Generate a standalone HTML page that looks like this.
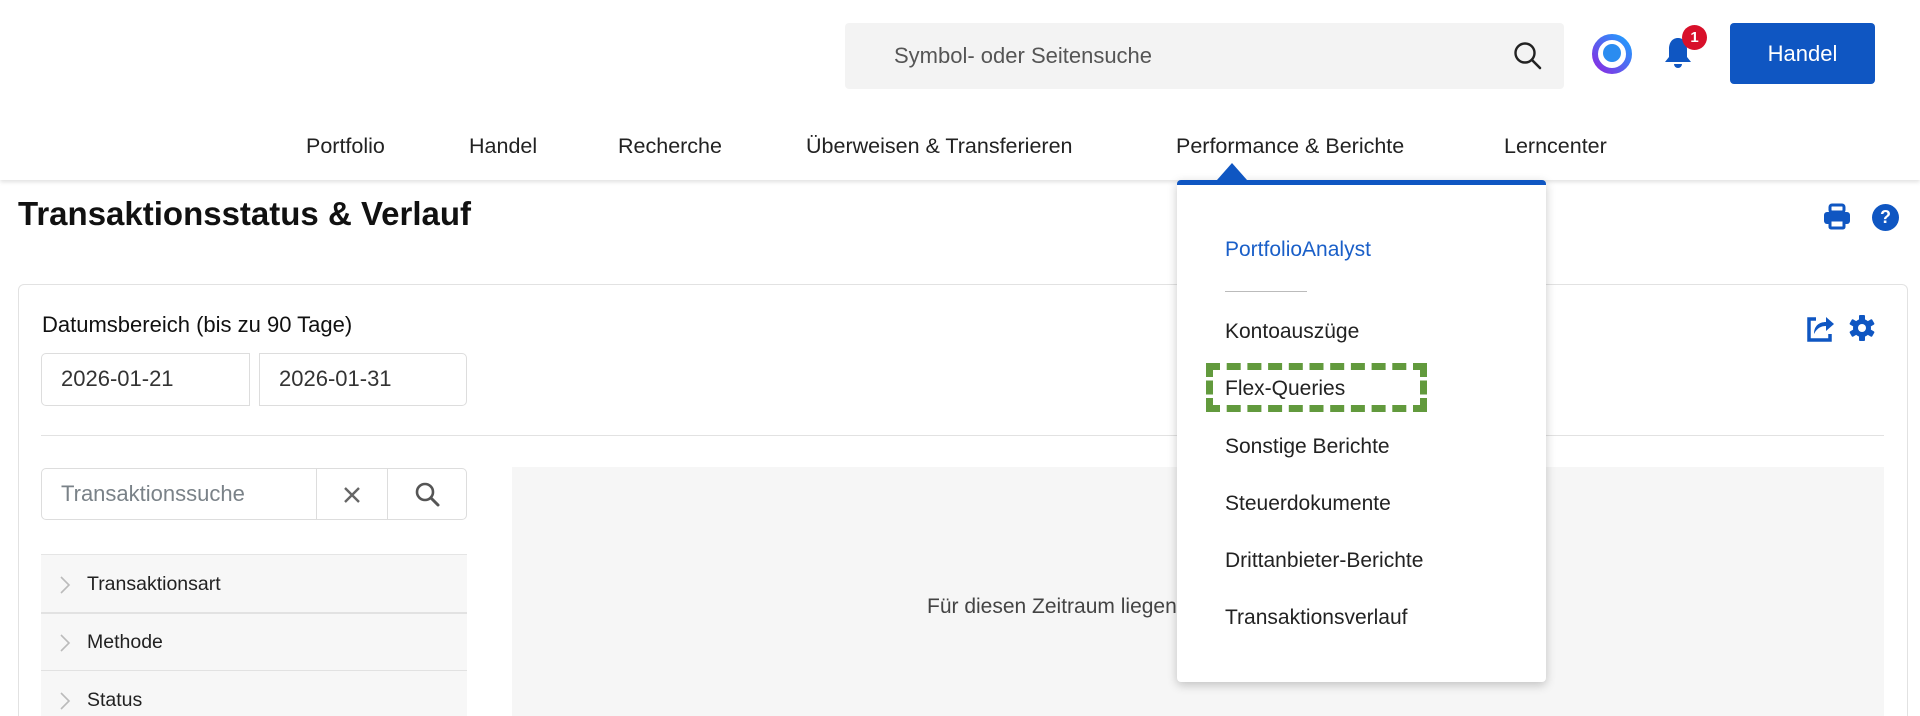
<!DOCTYPE html>
<html><head><meta charset="utf-8"><style>
*{margin:0;padding:0;box-sizing:border-box}
html,body{width:1920px;height:716px;overflow:hidden}
body{background:#fff;font-family:"Liberation Sans",sans-serif;color:#222;position:relative}
.a{position:absolute;white-space:nowrap}
.nav{font-size:21.5px;color:#222;top:134px}
.mi{font-size:21px;color:#222;left:1225px}
</style></head><body>
<div class="a" style="left:0;top:0;width:1920px;height:180px;background:#fff;box-shadow:0 2px 4px rgba(0,0,0,.12);z-index:1"></div>
<div class="a" style="left:845px;top:23px;width:719px;height:66px;background:#f3f3f3;border-radius:4px;z-index:2"></div>
<div class="a" style="left:894px;top:43px;font-size:22px;color:#555;z-index:2">Symbol- oder Seitensuche</div>
<svg class="a" style="left:1512px;top:40px;z-index:2" width="32" height="32" viewBox="0 0 32 32"><circle cx="13" cy="13" r="9.5" fill="none" stroke="#222" stroke-width="2.4"/><line x1="20" y1="20" x2="28" y2="28" stroke="#222" stroke-width="2.6" stroke-linecap="round"/></svg>
<svg class="a" style="left:1591px;top:33px;z-index:2" width="42" height="42" viewBox="0 0 42 42"><defs><linearGradient id="g" x1="0" y1="1" x2="1" y2="0"><stop offset="0" stop-color="#8a2be2"/><stop offset="1" stop-color="#1ea0ff"/></linearGradient></defs><circle cx="21" cy="21" r="17" fill="none" stroke="url(#g)" stroke-width="6"/><circle cx="21" cy="20" r="9" fill="#2a8cf0"/></svg>
<svg class="a" style="left:1660px;top:34px;z-index:2" width="36" height="40" viewBox="0 0 36 40"><path d="M18 4c-6 0-9 5-9 11v8l-4 5h26l-4-5v-8c0-6-3-11-9-11z" fill="#0f56c2"/><path d="M14 30a4 4 0 0 0 8 0z" fill="#0f56c2"/></svg>
<div class="a" style="left:1682px;top:25px;width:25px;height:25px;border-radius:50%;background:#d8102a;color:#fff;font-size:15px;font-weight:bold;text-align:center;line-height:25px;z-index:3">1</div>
<div class="a" style="left:1730px;top:23px;width:145px;height:61px;background:#0f56c2;border-radius:4px;color:#fff;font-size:22px;text-align:center;line-height:61px;z-index:2">Handel</div>
<div class="a nav" style="left:306px;z-index:2">Portfolio</div>
<div class="a nav" style="left:469px;z-index:2">Handel</div>
<div class="a nav" style="left:618px;z-index:2">Recherche</div>
<div class="a nav" style="left:806px;z-index:2">Überweisen &amp; Transferieren</div>
<div class="a nav" style="left:1176px;z-index:2">Performance &amp; Berichte</div>
<div class="a nav" style="left:1504px;z-index:2">Lerncenter</div>

<div class="a" style="left:18px;top:195px;font-size:33px;font-weight:bold;color:#111">Transaktionsstatus &amp; Verlauf</div>
<svg class="a" style="left:1823px;top:203px" width="28" height="28" viewBox="0 0 28 28"><rect x="7" y="2" width="14" height="7" rx="2" fill="none" stroke="#0f56c2" stroke-width="3"/><rect x="1" y="9" width="26" height="12" rx="3" fill="#0f56c2"/><rect x="7" y="17" width="14" height="8" rx="1" fill="#fff" stroke="#0f56c2" stroke-width="3"/></svg>
<div class="a" style="left:1872px;top:204px;width:27px;height:27px;border-radius:50%;background:#0f56c2;color:#fff;font-weight:bold;font-size:18px;text-align:center;line-height:27px">?</div>

<div class="a" style="left:18px;top:284px;width:1890px;height:440px;border:1px solid #e2e2e2;border-radius:6px"></div>
<div class="a" style="left:42px;top:312px;font-size:22px;color:#111">Datumsbereich (bis zu 90 Tage)</div>
<svg class="a" style="left:1804px;top:313px" width="32" height="32" viewBox="0 0 32 32"><path d="M12 6H5v21h21v-6" fill="none" stroke="#0f56c2" stroke-width="3.5"/><path d="M10 21c0-8 5-12 12-12V4l8 7-8 7v-5c-5 0-9 2-12 8z" fill="#0f56c2"/></svg>
<svg class="a" style="left:1848px;top:314px" width="28" height="28" viewBox="0 0 28 28"><g fill="#0f56c2"><circle cx="14" cy="14" r="9"/><rect x="11" y="1" width="6" height="26" rx="1"/><rect x="11" y="1" width="6" height="26" rx="1" transform="rotate(60 14 14)"/><rect x="11" y="1" width="6" height="26" rx="1" transform="rotate(120 14 14)"/></g><circle cx="14" cy="14" r="4" fill="#fff"/></svg>
<div class="a" style="left:41px;top:353px;width:209px;height:53px;border:1px solid #ddd;border-radius:5px 0 0 5px"></div>
<div class="a" style="left:259px;top:353px;width:208px;height:53px;border:1px solid #ddd;border-radius:0 5px 5px 0"></div>
<div class="a" style="left:61px;top:366px;font-size:22px;color:#333">2026-01-21</div>
<div class="a" style="left:279px;top:366px;font-size:22px;color:#333">2026-01-31</div>
<div class="a" style="left:41px;top:435px;width:1843px;height:1px;background:#e2e2e2"></div>
<div class="a" style="left:41px;top:468px;width:426px;height:52px;border:1px solid #ddd;border-radius:5px"></div>
<div class="a" style="left:316px;top:468px;width:1px;height:52px;background:#ddd"></div>
<div class="a" style="left:387px;top:468px;width:1px;height:52px;background:#ddd"></div>
<div class="a" style="left:61px;top:481px;font-size:22px;color:#7a8288">Transaktionssuche</div>
<svg class="a" style="left:343px;top:486px" width="18" height="18" viewBox="0 0 18 18"><path d="M2 2L16 16M16 2L2 16" stroke="#666" stroke-width="2.4"/></svg>
<svg class="a" style="left:413px;top:480px" width="28" height="28" viewBox="0 0 28 28"><circle cx="12" cy="12" r="8" fill="none" stroke="#555" stroke-width="2.6"/><line x1="18" y1="18" x2="25" y2="25" stroke="#555" stroke-width="3" stroke-linecap="round"/></svg>
<div class="a" style="left:41px;top:554px;width:426px;height:170px;background:#f7f7f7;border-top:1px solid #e5e5e5"></div>
<div class="a" style="left:41px;top:612px;width:426px;height:2px;background:#e2e2e2"></div>
<div class="a" style="left:41px;top:670px;width:426px;height:1px;background:#e2e2e2"></div>
<svg class="a" style="left:59px;top:575px" width="12" height="20" viewBox="0 0 12 20"><path d="M2 2l8 8-8 8" fill="none" stroke="#bbb" stroke-width="1.6"/></svg>
<svg class="a" style="left:59px;top:633px" width="12" height="20" viewBox="0 0 12 20"><path d="M2 2l8 8-8 8" fill="none" stroke="#bbb" stroke-width="1.6"/></svg>
<svg class="a" style="left:59px;top:691px" width="12" height="20" viewBox="0 0 12 20"><path d="M2 2l8 8-8 8" fill="none" stroke="#bbb" stroke-width="1.6"/></svg>
<div class="a" style="left:87px;top:573px;font-size:19.5px;color:#222">Transaktionsart</div>
<div class="a" style="left:87px;top:631px;font-size:19.5px;color:#222">Methode</div>
<div class="a" style="left:87px;top:689px;font-size:19.5px;color:#222">Status</div>
<div class="a" style="left:512px;top:467px;width:1372px;height:260px;background:#f6f6f6"></div>
<div class="a" style="left:927px;top:595px;font-size:21px;color:#444">Für diesen Zeitraum liegen keine Transaktionen vor.</div>

<div class="a" style="left:1177px;top:180px;width:369px;height:502px;background:#fff;border-top:5px solid #0f56c2;border-radius:4px;box-shadow:0 3px 10px rgba(0,0,0,.22);z-index:5"></div>
<div class="a" style="left:1217px;top:163px;width:0;height:0;border-left:15px solid transparent;border-right:15px solid transparent;border-bottom:17px solid #0f56c2;z-index:5"></div>
<div class="a mi" style="top:238px;color:#1a5fc8;z-index:6">PortfolioAnalyst</div>
<div class="a" style="left:1225px;top:291px;width:82px;height:1px;background:#bbb;z-index:6"></div>
<div class="a mi" style="top:320px;z-index:6">Kontoauszüge</div>
<div class="a mi" style="top:377px;z-index:6">Flex-Queries</div>
<div class="a mi" style="top:435px;z-index:6">Sonstige Berichte</div>
<div class="a mi" style="top:492px;z-index:6">Steuerdokumente</div>
<div class="a mi" style="top:549px;z-index:6">Drittanbieter-Berichte</div>
<div class="a mi" style="top:606px;z-index:6">Transaktionsverlauf</div>
<div class="a" style="left:1206px;top:363px;width:221px;height:49px;border:7px dashed #629a3d;z-index:7"></div>
</body></html>
